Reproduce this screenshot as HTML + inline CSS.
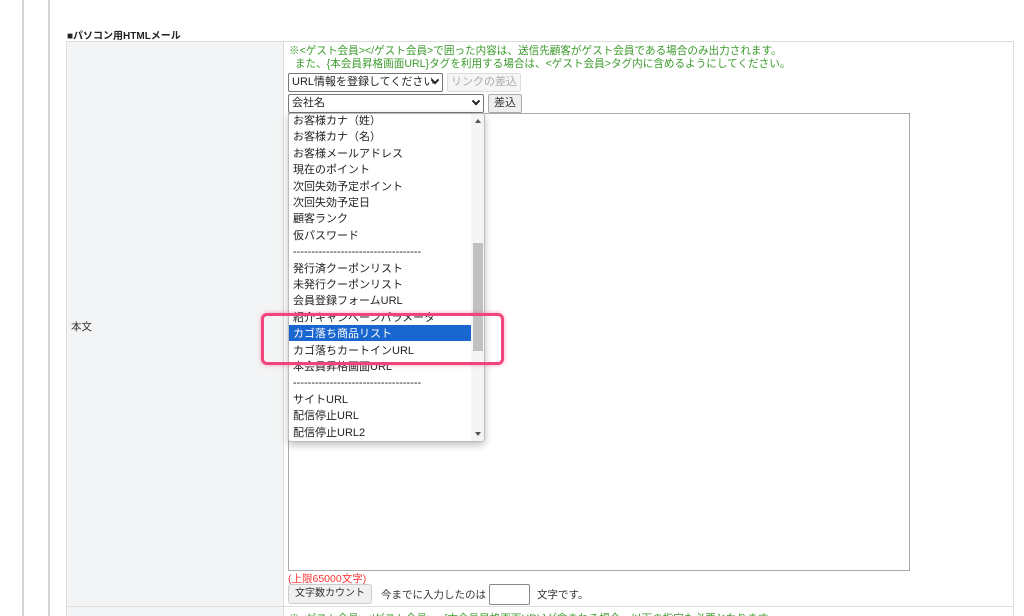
<!DOCTYPE html>
<html style="width:1024px;height:616px;overflow:hidden"><head><meta charset="utf-8"><style>
*{margin:0;padding:0;box-sizing:border-box}
body{width:1024px;height:616px;overflow:hidden;background:#fff;position:relative;font-family:"Liberation Sans","Noto Sans CJK JP",sans-serif;font-size:11px;color:#333}
.a{position:absolute}
.vl{position:absolute;top:0;height:616px;width:2px;background:#d5d5d5}
.g{color:#3a9a2a}
.sel{position:absolute;height:19px;border:1px solid #767676;border-radius:2px;background:#fff;font-size:11px;line-height:17px;padding-left:3px;color:#222}
.chev{position:absolute;right:4px;top:6px;width:6px;height:6px;border-right:2px solid #222;border-bottom:2px solid #222;transform:rotate(45deg) translate(-2px,-2px)}
.btn{position:absolute;height:19px;border:1px solid #aaa;border-radius:2px;background:#efefef;font-size:11px;line-height:17px;text-align:center}
.li{position:absolute;left:4px;font-size:11px;line-height:16.4px;height:16.4px;color:#222;white-space:nowrap}
</style></head><body>
<div class="vl" style="left:22px"></div>
<div class="vl" style="left:48px"></div>
<div class="a" style="left:67px;top:27px;font-weight:bold;font-size:10px;color:#222">■パソコン用HTMLメール</div>
<div class="a" style="left:66px;top:41px;width:948px;height:575px;border:1px solid #ddd;border-bottom:0"></div>
<div class="a" style="left:67px;top:42px;width:217px;height:574px;background:#f3f4f5;border-right:1px solid #ddd"></div>
<div class="a" style="left:66px;top:606px;width:948px;height:1px;background:#ddd"></div>
<div class="a" style="left:71px;top:319px;font-size:10.5px">本文</div>
<div class="a g" style="left:289px;top:45px;font-size:10.6px;line-height:13px;white-space:nowrap">※&lt;ゲスト会員&gt;&lt;/ゲスト会員&gt;で囲った内容は、送信先顧客がゲスト会員である場合のみ出力されます。<br>&nbsp;&nbsp;また、{本会員昇格画面URL}タグを利用する場合は、&lt;ゲスト会員&gt;タグ内に含めるようにしてください。</div>
<div class="sel" style="left:288px;top:73px;width:155px">URL情報を登録してください<span class="chev"></span></div>
<div class="btn" style="left:447px;top:73px;width:74px;color:#aaa;border-color:#ddd;background:#f5f5f5">リンクの差込</div>
<div class="sel" style="left:288px;top:94px;width:196px">会社名<span class="chev"></span></div>
<div class="btn" style="left:488px;top:94px;width:34px">差込</div>
<div class="a" style="left:288px;top:113px;width:622px;height:458px;border:1px solid #aaa"></div>
<div class="a" style="left:288px;top:113px;width:197px;height:329px;background:#fff;border:1px solid #bbb;border-radius:3px;box-shadow:0 3px 8px rgba(0,0,0,.25);overflow:hidden">
<div class="a" style="left:182px;top:0;width:14px;height:328px;background:#f5f5f5"></div>
<div class="a" style="left:184px;top:129px;width:10px;height:108px;background:#c1c1c1"></div>
<div class="a" style="left:186px;top:5px;border:3px solid transparent;border-bottom:4px solid #555;border-top:0"></div>
<div class="a" style="left:186px;top:318px;border:3px solid transparent;border-top:4px solid #555;border-bottom:0"></div>
<div class="a" style="left:0;top:211px;width:182px;height:16px;background:#1a66d0"></div>
<div class="li" style="top:-1px">お客様カナ（姓）</div>
<div class="li" style="top:15.4px">お客様カナ（名）</div>
<div class="li" style="top:31.8px">お客様メールアドレス</div>
<div class="li" style="top:48.2px">現在のポイント</div>
<div class="li" style="top:64.6px">次回失効予定ポイント</div>
<div class="li" style="top:81px">次回失効予定日</div>
<div class="li" style="top:97.4px">顧客ランク</div>
<div class="li" style="top:113.8px">仮パスワード</div>
<div class="li" style="top:130.2px">-----------------------------------</div>
<div class="li" style="top:146.6px">発行済クーポンリスト</div>
<div class="li" style="top:163px">未発行クーポンリスト</div>
<div class="li" style="top:179.4px">会員登録フォームURL</div>
<div class="li" style="top:195.8px">紹介キャンペーンパラメータ</div>
<div class="li" style="top:212.2px;color:#fff">カゴ落ち商品リスト</div>
<div class="li" style="top:228.6px">カゴ落ちカートインURL</div>
<div class="li" style="top:245px">本会員昇格画面URL</div>
<div class="li" style="top:261.4px">-----------------------------------</div>
<div class="li" style="top:277.8px">サイトURL</div>
<div class="li" style="top:294.2px">配信停止URL</div>
<div class="li" style="top:310.6px">配信停止URL2</div>
</div>
<div class="a" style="left:261px;top:313px;width:243px;height:52px;border:3px solid #f0457a;border-radius:6px;box-shadow:0 0 4px rgba(240,69,122,.5)"></div>
<div class="a" style="left:288px;top:571px;color:#f33;font-size:10.5px">(上限65000文字)</div>
<div class="btn" style="left:288px;top:584px;width:84px;height:20px;font-size:10px;background:#f0f0f0;border-color:#ccc;border-radius:3px">文字数カウント</div>
<div class="a" style="left:381px;top:587px;font-size:10.5px">今までに入力したのは</div>
<div class="a" style="left:489px;top:584px;width:41px;height:21px;border:1px solid #888;border-radius:2px"></div>
<div class="a" style="left:537px;top:587px;font-size:10.5px">文字です。</div>
<div class="a" style="left:289px;top:608px;width:700px;height:8px;overflow:hidden"><div class="a g" style="left:0;top:3px;font-size:10.6px;white-space:nowrap">※&lt;ゲスト会員&gt;&lt;/ゲスト会員&gt;、{本会員昇格画面URL}が含まれる場合、以下の指定も必要となります</div></div>
</body></html>
